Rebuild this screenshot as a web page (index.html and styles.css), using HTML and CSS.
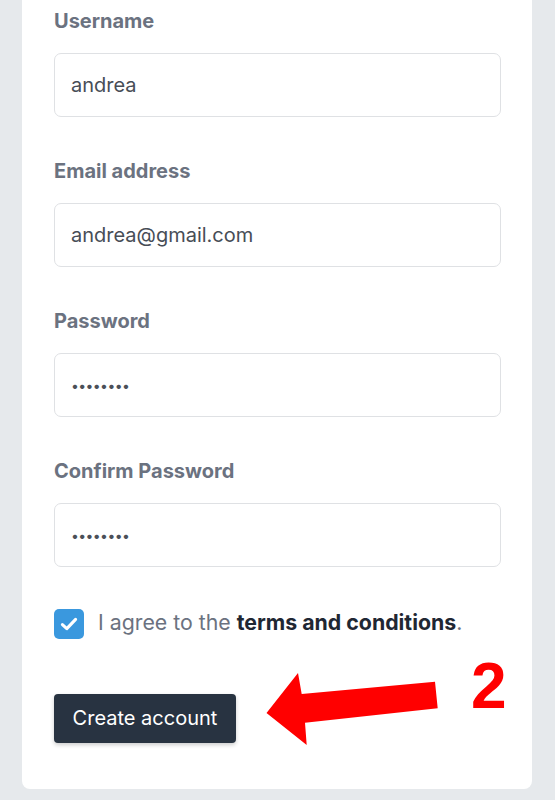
FILE: index.html
```html
<!DOCTYPE html>
<html>
<head>
<meta charset="utf-8">
<link rel="stylesheet" href="styles.css">
</head>
<body>
<div class="card">
  <div class="field">
    <label class="label">Username</label>
    <div class="input">andrea</div>
  </div>
  <div class="field">
    <label class="label">Email address</label>
    <div class="input">andrea@gmail.com</div>
  </div>
  <div class="field">
    <label class="label">Password</label>
    <div class="input dots">••••••••</div>
  </div>
  <div class="field">
    <label class="label">Confirm Password</label>
    <div class="input dots">••••••••</div>
  </div>
  <div class="agree">
    <span class="checkbox">
      <svg width="22" height="22" viewBox="0 0 20 20"><path d="M4 10.5 L8 14.2 L16 5.8" fill="none" stroke="#fff" stroke-width="2.8" stroke-linecap="round" stroke-linejoin="round"/></svg>
    </span>
    <span class="agree-text">I agree to the <b>terms and conditions</b>.</span>
  </div>
  <div class="actions">
    <button class="btn">Create account</button>
  </div>
</div>
<svg class="arrow" width="555" height="800" viewBox="0 0 555 800">
  <polygon points="266.5,713 298,673 301.7,694 435,681.7 437.7,708.3 305,722.7 306.7,745" fill="#ff0000"/>
</svg>
<div class="step">2</div>
</body>
</html>
```
FILE: styles.css
```css
html, body {
  margin: 0;
  padding: 0;
}
body {
  background: #e6e9ec;
  width: 555px;
  height: 800px;
  overflow: hidden;
  position: relative;
  font-family: Inter, Roboto, "Liberation Sans", sans-serif;
}
.card {
  margin-left: 22px;
  width: 510px;
  box-sizing: border-box;
  background: #ffffff;
  border-radius: 0 0 8px 8px;
  padding: 10px 31px 46px 32px;
  display: flex;
  flex-direction: column;
  gap: 43px;
}
.field {
  display: flex;
  flex-direction: column;
  gap: 19px;
}
.label {
  font-size: 20px;
  line-height: 24px;
  font-weight: 700;
  color: #6b7280;
  margin-top: -1px;
  margin-bottom: 1px;
}
.input {
  height: 64px;
  box-sizing: border-box;
  border: 1.5px solid #dfe1e4;
  border-radius: 7px;
  padding: 0 16px;
  display: flex;
  align-items: center;
  font-size: 20px;
  color: #474d56;
}
.input.dots {
  font-size: 14px;
  letter-spacing: -0.6px;
  color: #4b5058;
}
.agree {
  margin-top: -1px;
  height: 30px;
  display: flex;
  align-items: center;
  gap: 14px;
}
.checkbox {
  width: 30px;
  height: 30px;
  border-radius: 5px;
  background: #3a98de;
  display: flex;
  align-items: center;
  justify-content: center;
}
.agree-text {
  font-size: 21.3px;
  line-height: 26px;
  margin-top: -4px;
  color: #6b7280;
}
.agree-text b {
  color: #1f2733;
  font-weight: 700;
}
.actions {
  margin-top: 12px;
  display: flex;
}
.btn {
  height: 49px;
  width: 182px;
  border: none;
  border-radius: 4px;
  background: #283341;
  color: #ffffff;
  font-family: Inter, Roboto, "Liberation Sans", sans-serif;
  font-size: 20px;
  box-shadow: 0 2px 4px rgba(0,0,0,0.2);
  padding: 0 0 2px 0;
}
.arrow {
  position: absolute;
  left: 0;
  top: 0;
}
.step {
  position: absolute;
  left: 471px;
  top: 651px;
  font-family: "Liberation Sans", Arial, sans-serif;
  font-weight: 700;
  font-size: 64px;
  line-height: 70px;
  color: #ff0000;
}
```
